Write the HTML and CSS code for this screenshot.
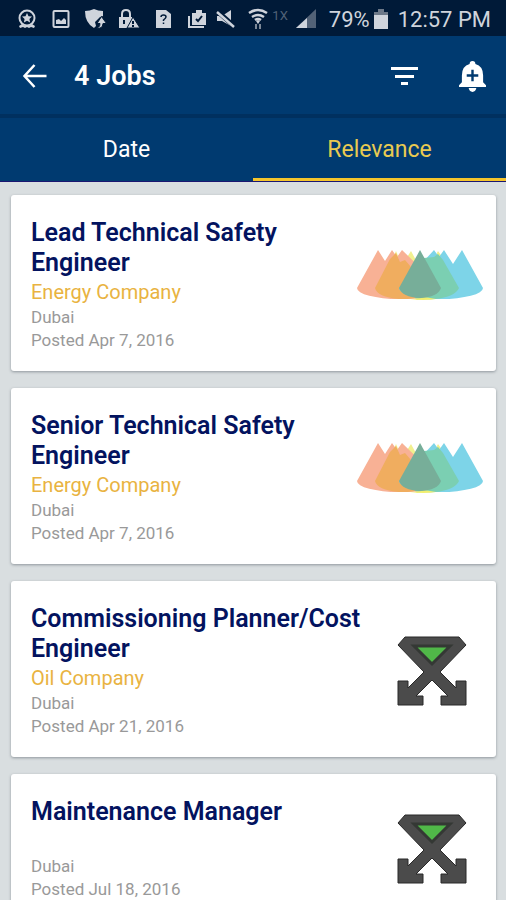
FILE: index.html
```html
<!DOCTYPE html>
<html lang="en">
<head>
<meta charset="utf-8">
<meta name="viewport" content="width=device-width, initial-scale=1">
<title>4 Jobs</title>
<link rel="stylesheet" href="styles.css">
</head>
<body>
<svg class="defs" aria-hidden="true">
  <symbol id="cones" viewBox="0 0 126 70">
    <path fill="#f1f08f" d="M30 22 39 1l6 14L54 1l20 37q0 11-14 12zM70 22 81 1l10 14z"/>
    <path fill="#f8b195" d="M0 38 21 0l7 11L35 0l5 7L45 0l39 38A42 11 0 0 1 0 38z"/>
    <path fill="#f0ad5f" d="M18 38 33 9l6-6 4 9 5-2 6 7 14 30q-9 2-26 2-22-2-24-11z"/>
    <path fill="#7dd4e8" d="M42 38 77 0l5 7 5-7 9 14 9-14 21 38A42 11 0 0 1 42 38z"/>
    <path fill="#7bcfb2" d="m58 48 9-40 10-1 4-3 5 6 16 28q-4 9-24 11-11 1-20-1z"/>
    <path fill="#f1ef70" d="M53 49q9 0 14-2l12 2q-12 2-26 0z"/>
    <path fill="#77ae99" d="M42 38 63 0l21 38q-3 9-21 10-18-1-21-10z"/>
  </symbol>
  <symbol id="rig" viewBox="0 0 70 70">
    <path fill="#4b4b4b" stroke="#292929" d="M8 1h54l7 8-26 27 16 16V45h10v24H44V60h7L35 44 19 60h7v9H1V45h10v7l16-16L1 9z"/>
    <path fill="#50b848" stroke="#343834" stroke-width="3" d="M17 10h36L35 28z"/>
  </symbol>
</svg>
<header class="top">
  <div class="status">
    <div class="notices" aria-hidden="true">
      <svg class="ico" viewBox="0 0 20 20"><circle cx="10" cy="9" r="7.5" fill="none" stroke="currentColor" stroke-width="2"/><path fill="currentColor" d="m10 4 1.5 3.2 3.5.4-2.6 2.4.7 3.5-3.1-1.7-3.1 1.7.7-3.500L5 7.600l3.500-.4zM2 17l3-2 3 2 2-1 2 1 3-2 3 2-1 2-3-1-2 1-2-1-2 1-2-1-3 1z"/></svg>
      <svg class="ico" viewBox="0 0 20 20"><rect x="2.500" y="2" width="15" height="16" rx="1" fill="none" stroke="currentColor" stroke-width="2"/><path fill="currentColor" d="M5 15v-4l3-1 2 2 3-3 2 2v4z"/></svg>
      <svg class="ico" viewBox="0 0 20 20"><path fill="currentColor" d="M0 2q5 0 9-2 4 2 9 2v5l-3 1-5 5 1 4-2 2Q0 14 0 2z"/><path fill="currentColor" stroke="#001a38" d="M9 19.500q6 0 6-5h-3l4.500-7 5 7H18q0 6-9 5z"/></svg>
      <svg class="ico" viewBox="0 0 20 20"><path fill="none" stroke="currentColor" stroke-width="2" d="M3 8V5q0-4 4-4t4 4v3"/><path fill="currentColor" d="M0 8h13v3l-5 8H0z"/><path fill="currentColor" stroke="#001a38" d="m14 8 7 11H8z"/><path stroke="#001a38" stroke-width="2" d="M14 12v3m0 1v2M5 11v4"/></svg>
      <svg class="ico" viewBox="0 0 20 20"><path fill="currentColor" d="M3 1h10l5 4v14H3z"/><path fill="none" stroke="#001a38" stroke-width="1.500" d="M8 8q0-2 2.500-2T13 8q0 1-2.500 3v1m0 1.500V15"/></svg>
      <svg class="ico" viewBox="0 0 20 20"><path fill="currentColor" d="M5 4h4V1h6v3h4v12H5z"/><path fill="none" stroke="currentColor" stroke-width="2" d="M2 7v11h15"/><path fill="none" stroke="#001a38" stroke-width="2" d="m9 10 2 2 4-5"/></svg>
    </div>
    <div class="signals">
      <svg class="ico" viewBox="0 0 20 20"><path fill="currentColor" d="M1 7h5l9-6v16l-9-5H1z"/><path stroke="#001a38" stroke-width="5" d="m1 2 17 15"/><path stroke="currentColor" stroke-width="2.500" d="m1 3 17 15"/></svg>
      <svg class="ico" viewBox="0 0 20 20"><g fill="none" stroke="currentColor" stroke-width="2.500"><path d="M1 4q9-6 18 0M4 8q6-4 12 0M7 11q3-2 6 0"/></g><path fill="currentColor" d="m8 12 2-1 2 1-2 3z"/><path stroke="#7d8998" stroke-width="2" d="M8 15v5m4-5v5"/></svg>
      <span class="net">1X</span>
      <svg class="ico" viewBox="0 0 20 20"><path fill="#526277" d="M20 0v19H0z"/><path fill="currentColor" d="M11 9v10H0z"/></svg>
      <span class="battery">79%<svg class="cell" viewBox="0 0 14 20"><path fill="#6c7888" d="M4 0h6v3h4v4H0V3h4z"/><path fill="currentColor" d="M0 6h14v14H0z"/></svg></span>
      <span>12:57 PM</span>
    </div>
  </div>
  <div class="appbar">
    <button class="tool" aria-label="Back"><svg viewBox="0 0 24 24" class="back"><path fill="none" stroke="currentColor" stroke-width="2.500" d="M24 12H2M12 1 2 12l10 11"/></svg></button>
    <h1>4 Jobs</h1>
    <button class="tool" aria-label="Filter"><svg class="filter" viewBox="0 0 27 20"><path fill="currentColor" d="M0 1h27v3H0zm4 8h19v3H4zm6 7h7v3h-7z"/></svg></button>
    <button class="tool" aria-label="Add alert"><svg class="bell" viewBox="0 0 28 32"><path fill="currentColor" d="M11 3q0-3 3-3t3 3q8 2 8 12v7l3 3v2H0v-2l3-3v-7Q3 5 11 3zm-1 25h8q-1 4-4 4t-4-4z"/><path stroke="#003a70" stroke-width="2.500" d="M14 9v12M8 15h12"/></svg></button>
  </div>
  <nav class="tabs">
    <a href="#date">Date</a>
    <a href="#relevance" class="active" aria-current="page">Relevance</a>
  </nav>
</header>
<main class="jobs">
  <article class="card">
    <div class="info">
      <h2>Lead Technical Safety Engineer</h2>
      <p class="company">Energy Company</p>
      <p>Dubai</p>
      <p>Posted Apr 7, 2016</p>
    </div>
    <svg class="cones" aria-hidden="true"><use href="#cones"/></svg>
  </article>
  <article class="card">
    <div class="info">
      <h2>Senior Technical Safety Engineer</h2>
      <p class="company">Energy Company</p>
      <p>Dubai</p>
      <p>Posted Apr 7, 2016</p>
    </div>
    <svg class="cones" aria-hidden="true"><use href="#cones"/></svg>
  </article>
  <article class="card">
    <div class="info">
      <h2>Commissioning Planner/Cost Engineer</h2>
      <p class="company">Oil Company</p>
      <p>Dubai</p>
      <p>Posted Apr 21, 2016</p>
    </div>
    <svg class="rig" aria-hidden="true"><use href="#rig"/></svg>
  </article>
  <article class="card">
    <div class="info">
      <h2>Maintenance Manager</h2>
      <p class="company"></p>
      <p>Dubai</p>
      <p>Posted Jul 18, 2016</p>
    </div>
    <svg class="rig" aria-hidden="true"><use href="#rig"/></svg>
  </article>
</main>
</body>
</html>
```
FILE: styles.css
```css
* { box-sizing: border-box; }
body {
  margin: 0;
  background: #d9dee0;
  font-family: Roboto, "Liberation Sans", sans-serif;
  color: #999;
}
h1, h2, p { margin: 0; }
.defs { display: none; }
.top { background: #003a70; color: #fff; }

.status {
  display: flex;
  justify-content: space-between;
  align-items: center;
  height: 36px;
  padding: 2px 15px 0 17px;
  background: #001a38;
  color: #cfd4dc;
  font-size: 22px;
  white-space: nowrap;
}
.notices { display: flex; gap: 14px; }
.signals { display: flex; align-items: center; }
.ico { display: block; width: 20px; height: 20px; overflow: visible; }
.signals .ico + .ico { margin-left: 12px; }
.net { margin: 0 8px 8px 4px; font-size: 13px; color: #526277; }
.battery { display: flex; align-items: center; gap: 4px; margin: 0 10px 0 13px; }
.cell { width: 14px; height: 20px; }

.appbar {
  display: flex;
  align-items: center;
  height: 82px;
  padding: 2px 20px 0 22px;
  border-bottom: 4px solid #00305f;
}
.appbar h1 { flex: 1; margin-left: 27px; font-size: 27px; line-height: 32px; font-weight: 600; }
.tool {
  display: flex;
  padding: 0;
  border: 0;
  background: none;
  color: #fff;
}
.tool + .tool { margin-left: 41px; }
.back { width: 25px; height: 24px; }
.filter { width: 27px; height: 20px; }
.bell { width: 27px; height: 31px; }

.tabs { display: flex; border-bottom: 1px solid #1a1670; }
.tabs a {
  flex: 1;
  height: 63px;
  border-bottom: 3px solid transparent;
  color: #fff;
  font-size: 23px;
  line-height: 64px;
  text-align: center;
  text-decoration: none;
}
.tabs .active { border-color: #f5c52c; color: #e9ca51; }

.jobs { display: flex; flex-direction: column; gap: 17px; padding: 13px 10px 17px 11px; }
.card {
  display: flex;
  align-items: center;
  padding: 23px 13px 19px 20px;
  border-radius: 3px;
  background: #fff;
  box-shadow: 0 1px 3px #8f979c;
}
.info { flex: 1; min-width: 0; font-size: 17px; line-height: 23px; }
.info p { font-weight: 400; }
.info h2 { font-size: 25px; line-height: 30px; font-weight: 600; color: #03135f; }
.info .company { min-height: 28px; font-size: 20px; line-height: 28px; color: #e9b341; }
.cones { width: 126px; height: 70px; }
.rig { width: 70px; height: 70px; margin-right: 16px; }
```
